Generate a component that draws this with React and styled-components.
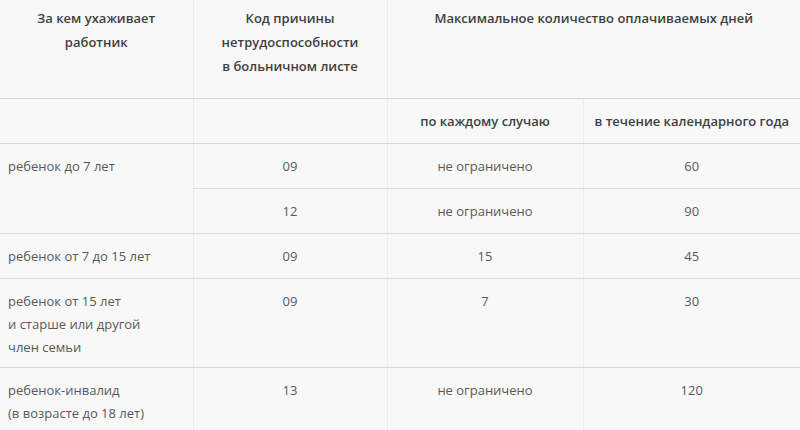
import React from "react";
import styled, { createGlobalStyle } from "styled-components";

const Global = createGlobalStyle`
  html, body { margin: 0; padding: 0; background: #f8f8f8; }
  body { font-family: "Open Sans", "Noto Sans", sans-serif; overflow: hidden; }
`;

const Table = styled.table`
  width: 800px;
  table-layout: fixed;
  border-collapse: collapse;
  background: #f8f8f8;
  color: #585858;
  font-size: 13px;
`;

const Row = styled.tr`
  height: ${(p) => p.$h}px;
`;

const Head = styled.th`
  font-weight: 600;
  color: #3e3e3e;
  text-align: center;
  vertical-align: top;
  line-height: 24px;
  padding: ${(p) => (p.$sub ? "10px 6px 0" : "6px 10px 0")};
  border-bottom: 1px solid #d6d6d6;
  border-left: ${(p) => (p.$first ? "none" : "1px solid #ebebeb")};
`;

const Cell = styled.td`
  text-align: ${(p) => (p.$left ? "left" : "center")};
  vertical-align: top;
  line-height: 23px;
  padding: 11px ${(p) => (p.$left ? "8px" : "6px")} 0;
  border-bottom: 1px solid #d9d9d9;
  border-left: ${(p) => (p.$first ? "none" : "1px solid #ebebeb")};
`;

const rows = [
  { who: ["ребенок до 7 лет"], span: 2, code: "09", each: "не ограничено", year: "60", h: 45 },
  { code: "12", each: "не ограничено", year: "90", h: 45 },
  { who: ["ребенок от 7 до 15 лет"], code: "09", each: "15", year: "45", h: 45 },
  {
    who: ["ребенок от 15 лет", "и старше или другой", "член семьи"],
    code: "09",
    each: "7",
    year: "30",
    h: 89,
  },
  {
    who: ["ребенок-инвалид", "(в возрасте до 18 лет)"],
    code: "13",
    each: "не ограничено",
    year: "120",
    h: 70,
  },
];

export default function App() {
  return (
    <>
      <Global />
      <Table>
        <colgroup>
          <col style={{ width: 193 }} />
          <col style={{ width: 194 }} />
          <col style={{ width: 196 }} />
          <col style={{ width: 217 }} />
        </colgroup>
        <thead>
          <Row $h={98}>
            <Head $first>За кем ухаживает<br />работник</Head>
            <Head>Код причины<br />нетрудоспособности<br />в больничном листе</Head>
            <Head colSpan={2}>Максимальное количество оплачиваемых дней</Head>
          </Row>
          <Row $h={45}>
            <Head $first $sub></Head>
            <Head $sub></Head>
            <Head $sub>по каждому случаю</Head>
            <Head $sub>в течение календарного года</Head>
          </Row>
        </thead>
        <tbody>
          {rows.map((r, i) => (
            <Row key={i} $h={r.h}>
              {r.who && (
                <Cell $first $left rowSpan={r.span || 1}>
                  {r.who.map((l, j) => (
                    <React.Fragment key={j}>
                      {j > 0 && <br />}
                      {l}
                    </React.Fragment>
                  ))}
                </Cell>
              )}
              <Cell>{r.code}</Cell>
              <Cell>{r.each}</Cell>
              <Cell>{r.year}</Cell>
            </Row>
          ))}
        </tbody>
      </Table>
    </>
  );
}
